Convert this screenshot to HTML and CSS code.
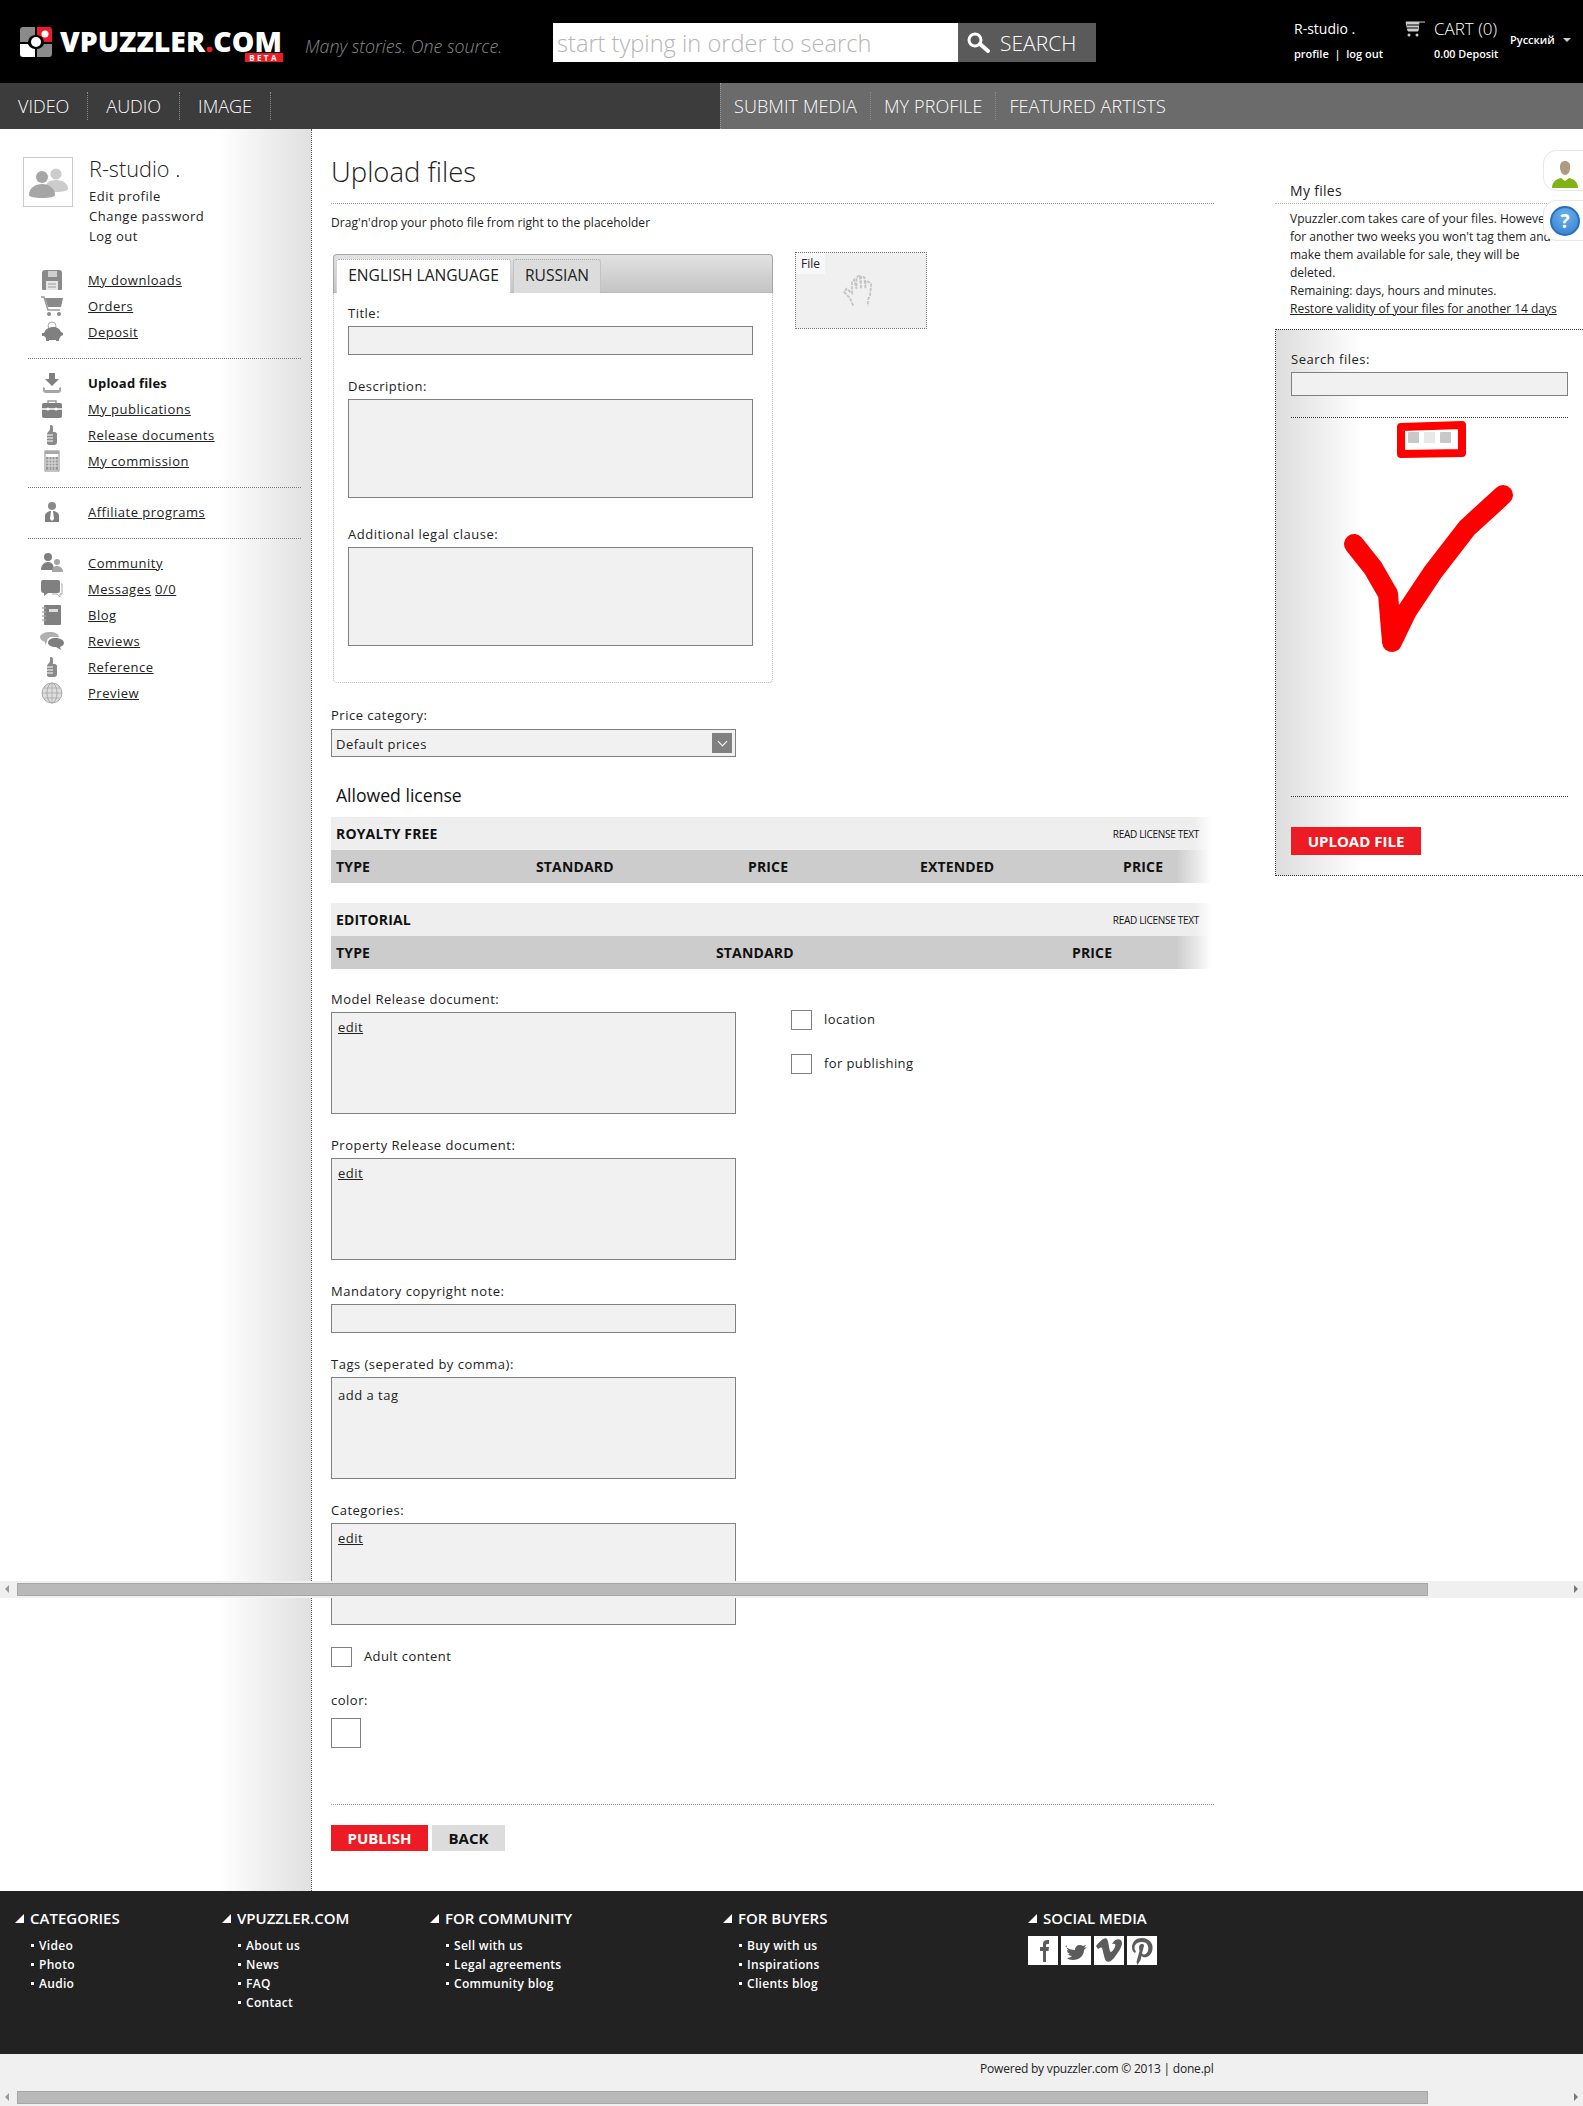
FILE: index.html
```html
<!DOCTYPE html>
<html lang="en">
<head>
  <meta charset="UTF-8">
  <title>Upload files - vpuzzler.com</title>
  <link rel="stylesheet" href="styles.css">
</head>
<body>
  <svg class="defs" xmlns="http://www.w3.org/2000/svg">
    <symbol id="thumb" viewBox="0 0 24 24">
      <path d="M11 2c2 0 2 2 2 4v3h2c1 0 2 1 2 2v8c0 2-1 3-3 3H9c-1 0-2-1-2-2v-9c0-2 3-3 3-5V3c0-.6.4-1 1-1z" fill="#8a8a8a"/>
      <path d="M6 12h7M6 15h7M6 18h7" stroke="#fff" stroke-width="1"/>
    </symbol>
  </svg>

  <div class="topbar">
    <a class="logo" href="#">
      <svg class="logo-mark" viewBox="0 0 32 30" xmlns="http://www.w3.org/2000/svg">
        <path d="M3 0h12v8a8 8 0 0 0-7 7H0V3a3 3 0 0 1 3-3z" fill="#8a8a8a"/>
        <path d="M17 0h12a3 3 0 0 1 3 3v12h-8a8 8 0 0 0-7-7z" fill="#ed1c24"/>
        <circle cx="25" cy="7" r="3.5" fill="#fff"/>
        <path d="M0 17h8a8 8 0 0 0 7 5v8H3a3 3 0 0 1-3-3z" fill="#fff"/>
        <path d="M24 17h8v10a3 3 0 0 1-3 3H17v-8a8 8 0 0 0 7-5z" fill="#8a8a8a"/>
        <circle cx="16" cy="15" r="5" fill="#fff"/>
      </svg>
      <span class="logo-text">VPUZZLER<span class="logo-dot">.</span>COM</span>
      <span class="logo-beta">BETA</span>
    </a>
    <div class="tagline">Many stories. One source.</div>
    <form class="search">
      <input class="search-input" type="text" placeholder="start typing in order to search">
      <button class="search-btn" type="button">
        <svg width="25" height="22" viewBox="0 0 25 22" xmlns="http://www.w3.org/2000/svg">
          <circle cx="9" cy="8" r="6" fill="none" stroke="#fff" stroke-width="3"/>
          <path d="M14 12l8 7" stroke="#fff" stroke-width="4" stroke-linecap="round"/>
        </svg>
        SEARCH
      </button>
    </form>
    <div class="account">
      <div class="account-name">R-studio .</div>
      <div class="account-links">profile &nbsp;|&nbsp; log out</div>
    </div>
    <div class="cart">
      <div class="cart-line">
        <svg width="22" height="16" viewBox="0 0 22 16" xmlns="http://www.w3.org/2000/svg">
          <path d="M2 1h13l-1 9H4zM15 1h6" fill="#ccc" stroke="#ccc"/>
          <path d="M3 4h12M3 7h11" stroke="#000"/>
          <circle cx="5" cy="14" r="1.5" fill="#ccc"/><circle cx="13" cy="14" r="1.5" fill="#ccc"/>
        </svg>
        <span>CART (0)</span>
      </div>
      <div class="cart-deposit">0.00 Deposit</div>
    </div>
    <div class="lang">Русский <span class="lang-caret"></span></div>
  </div>

  <div class="nav">
    <div class="nav-left">
      <a href="#">VIDEO</a>
      <a href="#">AUDIO</a>
      <a href="#">IMAGE</a>
    </div>
    <div class="nav-right">
      <a href="#">SUBMIT MEDIA</a>
      <a href="#">MY PROFILE</a>
      <a class="last" href="#">FEATURED ARTISTS</a>
    </div>
  </div>

  <div class="page">
    <div class="sidebar">
      <div class="profile">
        <div class="avatar">
          <svg width="46" height="34" viewBox="0 0 46 34" xmlns="http://www.w3.org/2000/svg">
            <circle cx="31" cy="9" r="5.5" fill="#ccc"/>
            <path d="M20 24c0-6 5-9 11-9s12 3 12 9c0 2-6 3-12 3s-11-1-11-3z" fill="#ccc"/>
            <circle cx="17" cy="12" r="6" fill="#a6a6a6"/>
            <path d="M4 30c0-7 6-11 13-11s13 4 13 11c0 2-6 3-13 3S4 32 4 30z" fill="#a6a6a6"/>
          </svg>
        </div>
        <div>
          <div class="profile-name">R-studio .</div>
          <a class="profile-link" href="#">Edit profile</a>
          <a class="profile-link" href="#">Change password</a>
          <a class="profile-link" href="#">Log out</a>
        </div>
      </div>

      <ul class="menu first">
        <li>
          <svg class="ico" viewBox="0 0 24 24"><path d="M5 2h14a3 3 0 0 1 3 3v16a1 1 0 0 1-1 1H3a1 1 0 0 1-1-1V5a3 3 0 0 1 3-3z" fill="#8a8a8a"/><path d="M8 3h9v6H8z" fill="#cfcfcf"/><path d="M6 13h12v9H6z" fill="#e6e6e6"/><path d="M8 16h8M8 19h8" stroke="#999"/></svg>
          <a href="#">My downloads</a>
        </li>
        <li>
          <svg class="ico" viewBox="0 0 24 24"><path d="M1 3h3l4 13h12" fill="none" stroke="#999" stroke-width="1.5"/><path d="M5 4h18l-2 9H8z" fill="#8a8a8a"/><circle cx="9" cy="20" r="2" fill="#8a8a8a"/><circle cx="19" cy="20" r="2" fill="#8a8a8a"/></svg>
          <a href="#">Orders</a>
        </li>
        <li>
          <svg class="ico" viewBox="0 0 24 24"><circle cx="12" cy="6" r="4" fill="none" stroke="#aaa"/><path d="M5 11c2-3 5-4 8-4 4 0 7 2 8 5l2 1v2l-2 1-2 3v2h-3v-1H9v1H6v-3l-2-2H2v-3h2z" fill="#808080"/></svg>
          <a href="#">Deposit</a>
        </li>
      </ul>
      <div class="menu-sep"></div>

      <ul class="menu">
        <li>
          <svg class="ico" viewBox="0 0 24 24"><path d="M9 2h6v6h4l-7 7-7-7h4z" fill="#808080"/><path d="M3 16v3a3 3 0 0 0 3 3h12a3 3 0 0 0 3-3v-3l-2 1v2H5v-2z" fill="#a6a6a6"/></svg>
          <a class="current" href="#">Upload files</a>
        </li>
        <li>
          <svg class="ico" viewBox="0 0 24 24"><path d="M8 6V4h8v2" fill="none" stroke="#999" stroke-width="1.5"/><rect x="2" y="6" width="20" height="15" rx="2" fill="#808080"/><path d="M2 12h20" stroke="#fff" stroke-width="1.5"/><circle cx="8" cy="12" r="1.5" fill="#fff"/><circle cx="16" cy="12" r="1.5" fill="#fff"/></svg>
          <a href="#">My publications</a>
        </li>
        <li>
          <svg class="ico"><use href="#thumb"/></svg>
          <a href="#">Release documents</a>
        </li>
        <li>
          <svg class="ico" viewBox="0 0 24 24"><rect x="5" y="2" width="14" height="20" fill="#fff" stroke="#8a8a8a"/><path d="M5 2h14v3H5z" fill="#aaa"/><path d="M6 8h12v13H6z" fill="#999"/><path d="M9 8v13M12 8v13M15 8v13M6 11h12M6 14h12M6 17h12" stroke="#eee" stroke-width=".8"/></svg>
          <a href="#">My commission</a>
        </li>
      </ul>
      <div class="menu-sep"></div>

      <ul class="menu">
        <li>
          <svg class="ico" viewBox="0 0 24 24"><circle cx="12" cy="6" r="4" fill="#8a8a8a"/><path d="M5 22v-6c0-3 3-5 7-5s7 2 7 5v6z" fill="#808080"/><path d="M11 11h2l1 8-2 2-2-2z" fill="#fff"/></svg>
          <a href="#">Affiliate programs</a>
        </li>
      </ul>
      <div class="menu-sep"></div>

      <ul class="menu">
        <li>
          <svg class="ico" viewBox="0 0 24 24"><circle cx="8" cy="6" r="4" fill="#808080"/><path d="M1 19c0-5 3-8 7-8s6 3 6 8z" fill="#808080"/><circle cx="17" cy="11" r="3" fill="#a6a6a6"/><path d="M12 21c0-4 2-6 5-6s6 2 6 6z" fill="#a6a6a6"/></svg>
          <a href="#">Community</a>
        </li>
        <li>
          <svg class="ico" viewBox="0 0 24 24"><path d="M3 3h15a2 2 0 0 1 2 2v9a2 2 0 0 1-2 2H8l-4 3v-3a3 3 0 0 1-3-3V5a2 2 0 0 1 2-2z" fill="#808080"/><path d="M21 7h1v10h-2v3l-3-3h-5" fill="none" stroke="#aaa"/></svg>
          <a href="#">Messages</a>&nbsp;<a href="#">0/0</a>
        </li>
        <li>
          <svg class="ico" viewBox="0 0 24 24"><rect x="4" y="2" width="17" height="20" rx="1" fill="#808080"/><path d="M2 5h4M2 9h4M2 13h4M2 17h4" stroke="#aaa" stroke-width="1.5"/><path d="M9 6h9v3H9z" fill="#ddd"/></svg>
          <a href="#">Blog</a>
        </li>
        <li>
          <svg class="ico" viewBox="0 0 24 24"><path d="M10 3c5 0 9 2 9 5H12c-3 0-5 2-5 5l-2 3v-3C2 12 0 10 0 8c0-3 5-5 10-5z" fill="#b0b0b0"/><path d="M15 9c5 0 9 2 9 5 0 2-2 3-4 4l1 3-5-3c-5 0-8-2-8-4 0-3 3-5 7-5z" fill="#808080"/></svg>
          <a href="#">Reviews</a>
        </li>
        <li>
          <svg class="ico"><use href="#thumb"/></svg>
          <a href="#">Reference</a>
        </li>
        <li>
          <svg class="ico" viewBox="0 0 24 24"><circle cx="12" cy="12" r="10" fill="#ddd" stroke="#aaa"/><ellipse cx="12" cy="12" rx="5" ry="10" fill="none" stroke="#aaa"/><path d="M12 2v20M2 12h20M4 7h16M4 17h16" stroke="#aaa" stroke-width=".8"/></svg>
          <a href="#">Preview</a>
        </li>
      </ul>
    </div>

    <div class="content">
      <h1>Upload files</h1>
      <p class="hint">Drag'n'drop your photo file from right to the placeholder</p>

      <div class="upload-row">
        <div class="tabs">
          <div class="tab-head">
            <div class="tab active">ENGLISH LANGUAGE</div>
            <div class="tab tab-ru">RUSSIAN</div>
          </div>
          <div class="tab-body">
            <label class="lbl">Title:</label>
            <input class="field" type="text">
            <label class="lbl gap-desc">Description:</label>
            <textarea class="field area"></textarea>
            <label class="lbl gap-legal">Additional legal clause:</label>
            <textarea class="field area"></textarea>
          </div>
        </div>
        <div class="dropbox">
          <span class="dropbox-label">File</span>
          <svg class="dropbox-hand" width="36" height="36" viewBox="0 0 32 32" xmlns="http://www.w3.org/2000/svg">
            <path d="M9 29l-3-7-5-5 2-3 5 4V8l2-2 2 8V4l3-2 1 12V3l3 1 1 10V7l3 1 2 2-1 10-2 4v5" fill="none" stroke="#c4c4c4" stroke-width="1.6" stroke-dasharray="3 1"/>
          </svg>
        </div>
      </div>

      <label class="lbl gap-price">Price category:</label>
      <div class="select">Default prices<span class="select-arrow"></span></div>

      <h2>Allowed license</h2>

      <div class="license">
        <div class="license-head"><strong>ROYALTY FREE</strong><a href="#">READ LICENSE TEXT</a></div>
        <div class="license-cols cols-five"><span>TYPE</span><span>STANDARD</span><span>PRICE</span><span>EXTENDED</span><span>PRICE</span></div>
      </div>
      <div class="license second">
        <div class="license-head"><strong>EDITORIAL</strong><a href="#">READ LICENSE TEXT</a></div>
        <div class="license-cols cols-three"><span>TYPE</span><span>STANDARD</span><span>PRICE</span></div>
      </div>

      <div class="release-row">
        <div>
          <label class="lbl">Model Release document:</label>
          <div class="field docbox"><a href="#">edit</a></div>
        </div>
        <div class="release-checks">
          <label class="check"><input type="checkbox">location</label>
          <label class="check"><input type="checkbox">for publishing</label>
        </div>
      </div>

      <label class="lbl gap-form">Property Release document:</label>
      <div class="field docbox"><a href="#">edit</a></div>

      <label class="lbl gap-form">Mandatory copyright note:</label>
      <input class="field narrow" type="text">

      <label class="lbl gap-form">Tags (seperated by comma):</label>
      <div class="field docbox tags">add a tag</div>

      <label class="lbl gap-form">Categories:</label>
      <div class="field docbox"><a href="#">edit</a></div>

      <label class="check adult"><input type="checkbox">Adult content</label>

      <label class="lbl gap-color">color:</label>
      <div class="swatch"></div>

      <div class="actions">
        <a class="btn btn-red" href="#">PUBLISH</a>
        <a class="btn btn-gray" href="#">BACK</a>
      </div>
    </div>

    <div class="files">
      <h3>My files</h3>
      <p class="files-info">
        Vpuzzler.com takes care of your files. However, if<br>
        for another two weeks you won't tag them and<br>
        make them available for sale, they will be<br>
        deleted.<br>
        Remaining: days, hours and minutes.<br>
        <a href="#">Restore validity of your files for another 14 days</a>
      </p>
      <div class="files-panel">
        <label class="lbl">Search files:</label>
        <input class="field files-search" type="text">
        <div class="files-list">
          <svg class="scribble" width="277" height="379" viewBox="0 0 277 379" xmlns="http://www.w3.org/2000/svg">
            <path d="M110 9l61-2 0 28-61 1z" fill="#fff" stroke="#f00" stroke-width="8" stroke-linejoin="round"/>
            <rect x="117" y="14" width="11" height="11" rx="1" fill="#c8c8c8"/>
            <rect x="133" y="14" width="11" height="11" rx="1" fill="#e8e8e8"/>
            <rect x="149" y="14" width="11" height="11" rx="1" fill="#c8c8c8"/>
            <path d="M63 126l19 24 15 26 4 48 15-31 26-39 34-44 36-33" fill="none" stroke="#f00" stroke-width="20" stroke-linecap="round" stroke-linejoin="round"/>
          </svg>
        </div>
        <a class="btn btn-red btn-upload" href="#">UPLOAD FILE</a>
      </div>
    </div>

    <div class="side-tab side-user">
      <svg width="26" height="28" viewBox="0 0 26 28" xmlns="http://www.w3.org/2000/svg">
        <path d="M8 7c0-4 2-6 5-6s6 2 5 7c0 4-2 7-5 7s-5-4-5-8z" fill="#b09a80"/>
        <path d="M0 28c0-6 4-9 9-10l4 3 4-3c5 1 9 4 9 10z" fill="#7fb414"/>
      </svg>
    </div>
    <div class="side-tab side-help"><span class="help-dot">?</span></div>
  </div>

  <div class="footer">
    <div class="foot-col w1">
      <h4>CATEGORIES</h4>
      <ul>
        <li><a href="#">Video</a></li>
        <li><a href="#">Photo</a></li>
        <li><a href="#">Audio</a></li>
      </ul>
    </div>
    <div class="foot-col w2">
      <h4>VPUZZLER.COM</h4>
      <ul>
        <li><a href="#">About us</a></li>
        <li><a href="#">News</a></li>
        <li><a href="#">FAQ</a></li>
        <li><a href="#">Contact</a></li>
      </ul>
    </div>
    <div class="foot-col w3">
      <h4>FOR COMMUNITY</h4>
      <ul>
        <li><a href="#">Sell with us</a></li>
        <li><a href="#">Legal agreements</a></li>
        <li><a href="#">Community blog</a></li>
      </ul>
    </div>
    <div class="foot-col w4">
      <h4>FOR BUYERS</h4>
      <ul>
        <li><a href="#">Buy with us</a></li>
        <li><a href="#">Inspirations</a></li>
        <li><a href="#">Clients blog</a></li>
      </ul>
    </div>
    <div class="foot-col">
      <h4>SOCIAL MEDIA</h4>
      <div class="social">
        <a href="#"><svg viewBox="0 0 30 29"><path d="M15 26V15h-3v-4h3V8c0-3 2-4 4-4h2v4h-1c-1 0-2 0-2 1v2h3l-.5 4H18v11z" fill="#5c5c5c"/></svg></a>
        <a href="#"><svg viewBox="0 0 30 29"><path d="M4 10c3 3 7 4 10 4 0-3 2-5 5-5 1 0 2 .5 3 1l3-1-2 3 3-1-3 3c0 6-5 10-11 10-3 0-5-1-6-2 2 0 4-1 5-2-2 0-3-1-4-2h2c-2-1-3-2-3-4l2 .5c-2-1-3-3-2-5z" fill="#5c5c5c"/></svg></a>
        <a href="#"><svg viewBox="0 0 30 29"><path d="M2 10l2 3c2-1 3-2 4-1 1 2 2 10 4 13 3 2 5 0 8-3 4-5 8-11 8-15 0-4-6-6-10 1 3-1 4 0 3 3-1 2-3 5-4 5-2 0-2-10-4-13C11 0 5 6 2 10z" fill="#5c5c5c"/></svg></a>
        <a href="#"><svg viewBox="0 0 30 29"><path d="M15 2C8 2 5 7 5 11c0 3 1 5 3 6 1-1 1-2 0-3-1-2-1-8 7-8 6 0 7 5 6 9-1 3-5 5-6 2l2-7c0-3-4-3-5 1l.5 4-3 11 1 3 3-5 1-4c3 3 10 1 11-7 1-6-4-11-10-11z" fill="#5c5c5c"/></svg></a>
      </div>
    </div>
  </div>

  <div class="bottom">
    <div class="powered">Powered by vpuzzler.com © 2013 | done.pl</div>
    <div class="hscroll"><span class="hscroll-left"></span><span class="hscroll-thumb"></span><span class="hscroll-right"></span></div>
  </div>

  <div class="hscroll hscroll-mid"><span class="hscroll-left"></span><span class="hscroll-thumb"></span><span class="hscroll-right"></span></div>
</body>
</html>
```

FILE: styles.css
```css
* {
  box-sizing: border-box;
}
html, body {
  margin: 0;
  padding: 0;
}
body {
  position: relative;
  width: 1583px;
  height: 2106px;
  overflow: hidden;
  font-family: "Open Sans", "Noto Sans", sans-serif;
  font-size: 12px;
  line-height: 18px;
  color: #222;
  background-color: white;
}
a {
  color: inherit;
}
ul {
  list-style: none;
  margin: 0;
  padding: 0;
}
.defs {
  display: none;
}

/* top bar */
.topbar {
  display: flex;
  height: 83px;
  background-color: #000;
  color: white;
}
.logo {
  position: relative;
  display: flex;
  width: 283px;
  padding: 27px 0 0 20px;
  text-decoration: none;
  color: white;
}
.logo-mark {
  width: 32px;
  height: 30px;
}
.logo-text {
  height: 24px;
  margin: 2px 0 0 8px;
  font-size: 28.4px;
  line-height: 24px;
  font-weight: 800;
  white-space: nowrap;
}
.logo-dot {
  color: #ed1c24;
}
.logo-beta {
  position: absolute;
  right: 0;
  top: 53px;
  width: 38px;
  height: 9px;
  background-color: #ed1c24;
  font-size: 8px;
  line-height: 9px;
  font-weight: 700;
  letter-spacing: 2.4px;
  text-align: center;
}
.tagline {
  width: 270px;
  padding: 35px 0 0 22px;
  font-size: 17.8px;
  line-height: 22px;
  font-weight: 300;
  font-style: italic;
  color: #8a8a8a;
}
.search {
  display: flex;
  width: 543px;
  height: 39px;
  margin-top: 23px;
}
.search-input {
  width: 405px;
  height: 39px;
  padding: 0 4px;
  border: 0;
  background-color: white;
  font-family: inherit;
  font-size: 23.6px;
  font-weight: 300;
}
.search-input::placeholder {
  color: #b5b5b5;
  opacity: 1;
}
.search-btn {
  display: flex;
  align-items: center;
  gap: 9px;
  width: 138px;
  height: 39px;
  padding: 0 0 0 8px;
  border: 0;
  background-color: #5a5a5a;
  color: white;
  font-family: inherit;
  font-size: 21px;
  font-weight: 300;
}
.account {
  width: 110px;
  margin-left: 198px;
  padding-top: 19px;
}
.account-name {
  font-size: 14px;
  font-weight: 400;
  line-height: 20px;
  white-space: nowrap;
}
.account-links {
  margin-top: 6px;
  font-size: 11px;
  font-weight: 600;
  line-height: 18px;
  white-space: nowrap;
}
.cart {
  width: 106px;
  padding-top: 19px;
}
.cart-line {
  display: flex;
  align-items: center;
  gap: 8px;
  font-size: 17px;
  font-weight: 300;
  line-height: 20px;
  white-space: nowrap;
}
.cart-deposit {
  margin: 6px 0 0 30px;
  font-size: 10.8px;
  font-weight: 600;
  line-height: 18px;
  white-space: nowrap;
}
.lang {
  padding-top: 31px;
  font-size: 11px;
  font-weight: 600;
  white-space: nowrap;
}
.lang-caret {
  display: inline-block;
  margin-left: 5px;
  vertical-align: 2px;
  border-top: 4px solid #ccc;
  border-left: 4px solid transparent;
  border-right: 4px solid transparent;
}

/* main nav */
.nav {
  display: flex;
  height: 46px;
  font-size: 18px;
  font-weight: 300;
  color: white;
}
.nav a {
  height: 28px;
  line-height: 28px;
  text-decoration: none;
  white-space: nowrap;
  border-right: 1px dotted #8a8a8a;
}
.nav-left {
  display: flex;
  align-items: center;
  width: 720px;
  background-color: #3c3c3c;
}
.nav-left a {
  padding: 0 18px;
}
.nav-right {
  display: flex;
  align-items: center;
  flex: 1;
  background-color: #6b6b6b;
  border-left: 1px dotted #999;
  letter-spacing: 0.1px;
}
.nav-right a {
  padding: 0 13px;
}
.nav-right a.last {
  border-right: 0;
}

/* layout */
.page {
  position: relative;
  display: flex;
  height: 1762px;
}
.sidebar {
  width: 312px;
  padding-top: 28px;
  background: linear-gradient(to right, white 70%, #e0e0e0 100%);
  border-right: 1px dotted #555;
}
.content {
  width: 903px;
  padding: 25px 0 0 19px;
}
.files {
  width: 368px;
  padding: 53px 0 0 60px;
}

/* sidebar */
.profile {
  display: flex;
  padding-left: 23px;
  gap: 16px;
}
.avatar {
  display: flex;
  align-items: center;
  justify-content: center;
  width: 50px;
  height: 50px;
  border: 1px solid #ccc;
  background-color: white;
}
.profile-name {
  height: 29px;
  font-size: 21.7px;
  line-height: 24px;
  font-weight: 300;
  white-space: nowrap;
}
.profile-link {
  display: block;
  font-size: 13px;
  line-height: 20px;
  letter-spacing: 0.5px;
  text-decoration: none;
}
.menu {
  padding: 11px 0 0 40px;
}
.menu.first {
  padding-top: 21px;
}
.menu li {
  display: flex;
  align-items: center;
  height: 26px;
  font-size: 13px;
  letter-spacing: 0.5px;
}
.ico {
  width: 24px;
  height: 24px;
  margin-right: 24px;
  flex: none;
}
.menu .current {
  font-weight: 700;
  letter-spacing: 0.2px;
  text-decoration: none;
  color: #111;
}
.menu-sep {
  width: 273px;
  margin: 13px 0 0 28px;
  border-top: 1px dotted #777;
}

/* form */
h1 {
  width: 883px;
  margin: 0;
  padding-bottom: 13px;
  font-size: 27.5px;
  line-height: 36px;
  font-weight: 300;
  border-bottom: 1px dotted #999;
}
.hint {
  margin: 10px 0 0;
  letter-spacing: 0.05px;
}
.upload-row {
  display: flex;
  margin-top: 20px;
}
.tabs {
  width: 440px;
  margin: 2px 0 0 2px;
}
.tab-head {
  display: flex;
  gap: 2px;
  height: 39px;
  padding: 4px 0 0 2px;
  border: 1px solid #a5a5a5;
  border-bottom-color: #bbb;
  border-radius: 4px 4px 0 0;
  background: linear-gradient(to bottom, #e2e2e2, #c4c4c4);
}
.tab {
  width: 175px;
  height: 34px;
  font-size: 15.6px;
  line-height: 30px;
  text-align: center;
  white-space: nowrap;
  background-color: #dcdcdc;
  border: 1px dotted #aaa;
  border-bottom: 0;
  border-radius: 3px 3px 0 0;
}
.tab.tab-ru {
  width: 88px;
}
.tab.active {
  background-color: white;
}
.tab-body {
  height: 390px;
  padding: 11px 0 0 14px;
  border: 1px dotted #bbb;
  border-top: 0;
  border-radius: 0 0 4px 4px;
}
.lbl {
  display: block;
  height: 18px;
  margin-bottom: 4px;
  font-size: 13px;
  letter-spacing: 0.5px;
  white-space: nowrap;
}
.field {
  display: block;
  width: 405px;
  height: 29px;
  padding: 3px 6px;
  border: 1px solid #808080;
  background-color: #f1f1f1;
  font-family: inherit;
  font-size: 13px;
  letter-spacing: 0.5px;
  resize: none;
  border-radius: 0;
}
.area {
  height: 99px;
}
.gap-desc {
  margin-top: 22px;
}
.gap-legal {
  margin-top: 27px;
}
.gap-price {
  margin-top: 23px;
  margin-bottom: 5px;
}
.gap-form {
  margin-top: 22px;
}
.gap-color {
  margin-top: 24px;
  margin-bottom: 9px;
}
.dropbox {
  position: relative;
  width: 132px;
  height: 77px;
  margin-left: 22px;
  border: 1px dotted #777;
  background-color: #f0f0f0;
}
.dropbox-label {
  display: block;
  width: 29px;
  height: 21px;
  padding-left: 5px;
  font-size: 12px;
  line-height: 22px;
  background-color: #f8f8f8;
}
.dropbox-hand {
  position: absolute;
  left: 47px;
  top: 20px;
}
.select {
  position: relative;
  width: 405px;
  height: 28px;
  padding-left: 4px;
  border: 1px solid #808080;
  background-color: #f1f1f1;
  font-size: 13px;
  letter-spacing: 0.5px;
  line-height: 28px;
}
.select-arrow {
  position: absolute;
  right: 3px;
  top: 3px;
  width: 20px;
  height: 20px;
  background-color: #808080;
}
.select-arrow::after {
  content: "";
  position: absolute;
  left: 7px;
  top: 5px;
  width: 6px;
  height: 6px;
  border-right: 1.5px solid white;
  border-bottom: 1.5px solid white;
  transform: rotate(45deg);
}
h2 {
  margin: 27px 0 11px 5px;
  font-size: 17.6px;
  line-height: 22px;
  font-weight: 400;
  color: #111;
}
.license {
  width: 881px;
  font-size: 14px;
  letter-spacing: 0.15px;
  color: #111;
}
.license.second {
  margin-top: 20px;
}
.license-head {
  display: flex;
  justify-content: space-between;
  align-items: center;
  height: 33px;
  padding: 0 13px 0 5px;
  background: linear-gradient(to right, #eee 98%, white);
}
.license-head a {
  font-size: 10px;
  letter-spacing: -0.3px;
  text-decoration: none;
}
.license-cols {
  display: grid;
  align-items: center;
  height: 33px;
  padding-left: 5px;
  font-weight: 700;
  background: linear-gradient(to right, #ccc 96%, white);
}
.cols-five {
  grid-template-columns: 200px 212px 172px 203px 1fr;
}
.cols-three {
  grid-template-columns: 380px 356px 1fr;
}
.release-row {
  display: flex;
  margin-top: 21px;
}
.release-checks {
  display: flex;
  flex-direction: column;
  gap: 24px;
  margin-left: 55px;
  padding-top: 20px;
}
.check {
  display: flex;
  align-items: flex-start;
  height: 20px;
  font-size: 13px;
  letter-spacing: 0.4px;
}
.check input {
  appearance: none;
  width: 21px;
  height: 20px;
  margin: 0 12px 0 0;
  border: 1px solid #808080;
  background-color: white;
}
.docbox {
  height: 102px;
  padding: 5px 6px;
  line-height: 18px;
}
.docbox.tags {
  padding-top: 8px;
}
.adult {
  margin-top: 22px;
}
.swatch {
  width: 30px;
  height: 30px;
  border: 1px solid #808080;
}
.actions {
  display: flex;
  gap: 4px;
  width: 883px;
  margin-top: 56px;
  padding-top: 20px;
  border-top: 1px dotted #999;
}
.btn {
  display: inline-block;
  height: 26px;
  padding: 0;
  font-size: 15px;
  font-weight: 700;
  line-height: 27px;
  text-decoration: none;
}
.btn-red {
  width: 97px;
  text-align: center;
  background-color: #ed1c24;
  color: white;
}
.btn-gray {
  width: 73px;
  text-align: center;
  background-color: #dcdcdc;
  color: #111;
}

/* right column */
h3 {
  margin: 0;
  padding: 0 0 3px 15px;
  font-size: 14px;
  letter-spacing: 0.3px;
  line-height: 18px;
  font-weight: 400;
  border-bottom: 1px dotted #aaa;
}
.files-info {
  margin: 6px 0 0 15px;
  white-space: nowrap;
}
.files-panel {
  height: 547px;
  margin-top: 11px;
  padding: 20px 0 0 15px;
  border: 1px dotted #333;
  border-right: 0;
  background: linear-gradient(to right, #ddd, white 28%);
}
.files-search {
  width: 277px;
  height: 24px;
}
.files-list {
  position: relative;
  width: 277px;
  height: 380px;
  margin: 21px 0 30px;
  border-top: 1px dotted #333;
  border-bottom: 1px dotted #333;
}
.scribble {
  position: absolute;
  left: 0;
  top: 0;
}
.btn-upload {
  width: 130px;
  height: 28px;
  line-height: 29px;
}

/* help tabs over the right column */
.side-tab {
  position: absolute;
  right: 0;
  width: 40px;
  height: 41px;
  background-color: white;
  border: 1px solid #e8e8e8;
  border-right: 0;
  border-radius: 14px 0 0 14px;
}
.side-user {
  top: 21px;
  padding: 9px 0 0 8px;
}
.side-help {
  top: 71px;
  padding: 5px 0 0 6px;
}
.help-dot {
  display: block;
  width: 30px;
  height: 30px;
  border: 2px solid #2a70b8;
  border-radius: 50%;
  background: radial-gradient(circle at 50% 30%, #6db1ea, #2f7fcf);
  color: white;
  font-size: 19px;
  font-weight: 700;
  line-height: 26px;
  text-align: center;
}

/* footer */
.footer {
  display: flex;
  height: 163px;
  padding: 18px 0 0 15px;
  background-color: #222;
  color: white;
}
.foot-col.w1 { width: 207px; }
.foot-col.w2 { width: 208px; }
.foot-col.w3 { width: 293px; }
.foot-col.w4 { width: 305px; }
h4 {
  display: flex;
  align-items: center;
  margin: 0 0 9px;
  font-size: 15px;
  line-height: 18px;
  font-weight: 600;
  white-space: nowrap;
}
h4::before {
  content: "";
  margin-right: 6px;
  border-bottom: 9px solid white;
  border-left: 9px solid transparent;
}
.foot-col li {
  display: flex;
  align-items: center;
  height: 19px;
  margin-left: 16px;
  font-size: 12px;
  font-weight: 600;
  letter-spacing: 0.3px;
}
.foot-col li::before {
  content: "";
  width: 3px;
  height: 3px;
  margin-right: 5px;
  background-color: white;
}
.foot-col li a {
  text-decoration: none;
}
.social {
  display: flex;
  gap: 3px;
}
.social a {
  display: block;
  width: 30px;
  height: 29px;
  background-color: white;
}
.social svg {
  display: block;
  width: 30px;
  height: 29px;
}

/* bottom strip and scrollbars */
.bottom {
  height: 52px;
  padding-top: 6px;
  background-color: #f0f0f0;
}
.powered {
  height: 18px;
  margin-bottom: 11px;
  padding-left: 980px;
  font-size: 12px;
  letter-spacing: -0.2px;
}
.hscroll {
  position: relative;
  display: block;
  width: 100%;
  height: 17px;
  background-color: #f0f0f0;
}
.hscroll-mid {
  position: absolute;
  left: 0;
  top: 1581px;
}
.hscroll-thumb {
  position: absolute;
  left: 17px;
  top: 2px;
  width: 1411px;
  height: 13px;
  background-color: #b9b9b9;
  border: 1px solid #a6a6a6;
}
.hscroll-left, .hscroll-right {
  position: absolute;
  top: 4px;
  border-top: 4px solid transparent;
  border-bottom: 4px solid transparent;
}
.hscroll-left {
  left: 5px;
  border-right: 4px solid #999;
}
.hscroll-right {
  right: 5px;
  border-left: 4px solid #777;
}
```
